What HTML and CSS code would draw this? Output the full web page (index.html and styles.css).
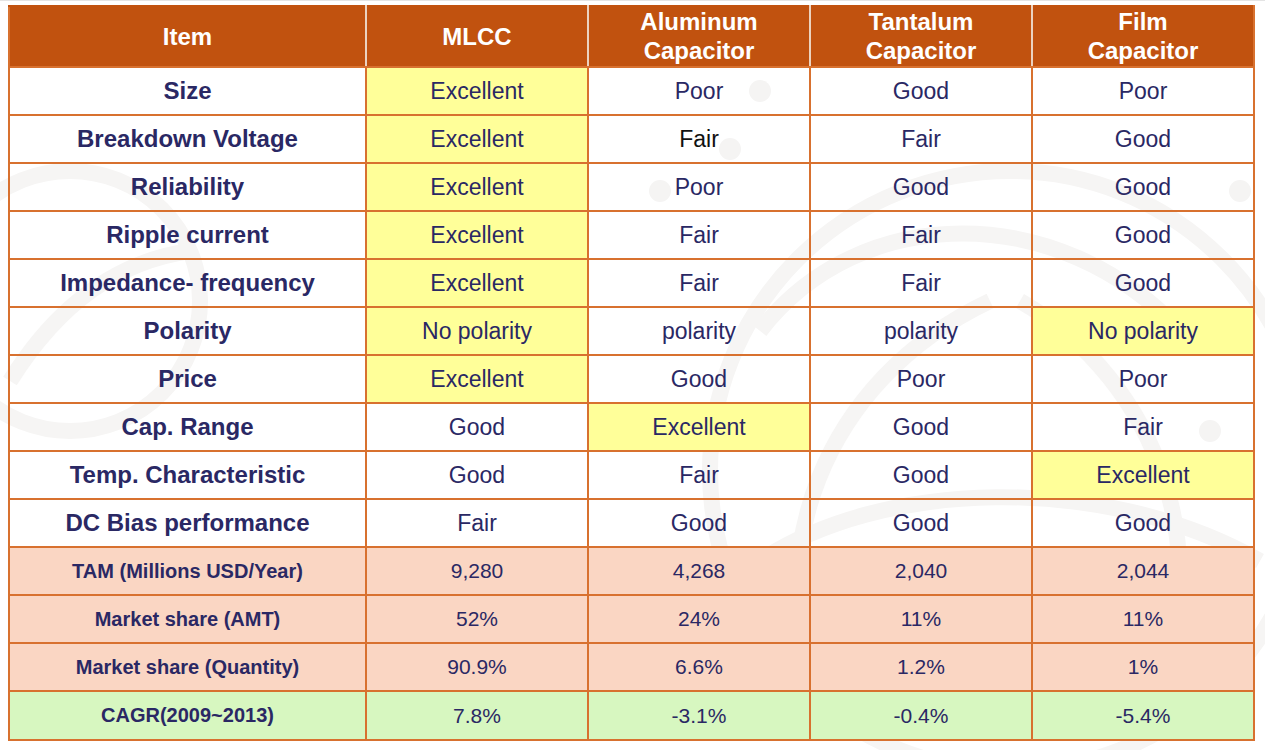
FILE: index.html
```html
<!DOCTYPE html>
<html>
<head>
<meta charset="utf-8">
<link rel="stylesheet" href="styles.css">
</head>
<body>
<div class="page">
  <svg class="watermark" width="1265" height="750" viewBox="0 0 1265 750">
    <g fill="none" stroke="#f6f5f4" stroke-width="16">
      <circle cx="1010" cy="470" r="300"/>
      <path d="M760 330 C 860 200, 1060 200, 1180 330"/>
      <path d="M820 700 C 760 560, 820 380, 990 300"/>
      <path d="M1020 300 C 1160 380, 1220 560, 1150 700"/>
      <path d="M760 560 C 880 480, 1100 470, 1260 560"/>
      <circle cx="70" cy="300" r="130"/>
      <path d="M10 380 C 60 300, 120 260, 190 250"/>
    </g>
    <g fill="#f5f4f3">
      <circle cx="760" cy="90" r="11"/>
      <circle cx="730" cy="148" r="11"/>
      <circle cx="660" cy="190" r="11"/>
      <circle cx="1240" cy="190" r="11"/>
      <circle cx="1210" cy="430" r="11"/>
    </g>
  </svg>
  <table class="grid">
    <colgroup>
      <col class="c-item"><col class="c-val"><col class="c-val"><col class="c-val"><col class="c-val">
    </colgroup>
    <thead>
      <tr class="head">
        <th>Item</th><th>MLCC</th><th>Aluminum<br>Capacitor</th><th>Tantalum<br>Capacitor</th><th>Film<br>Capacitor</th>
      </tr>
    </thead>
    <tbody>
      <tr><th>Size</th><td class="hl">Excellent</td><td>Poor</td><td>Good</td><td>Poor</td></tr>
      <tr><th>Breakdown Voltage</th><td class="hl">Excellent</td><td class="black">Fair</td><td>Fair</td><td>Good</td></tr>
      <tr><th>Reliability</th><td class="hl">Excellent</td><td>Poor</td><td>Good</td><td>Good</td></tr>
      <tr><th>Ripple current</th><td class="hl">Excellent</td><td>Fair</td><td>Fair</td><td>Good</td></tr>
      <tr><th>Impedance- frequency</th><td class="hl">Excellent</td><td>Fair</td><td>Fair</td><td>Good</td></tr>
      <tr><th>Polarity</th><td class="hl">No polarity</td><td>polarity</td><td>polarity</td><td class="hl">No polarity</td></tr>
      <tr><th>Price</th><td class="hl">Excellent</td><td>Good</td><td>Poor</td><td>Poor</td></tr>
      <tr><th>Cap. Range</th><td>Good</td><td class="hl">Excellent</td><td>Good</td><td>Fair</td></tr>
      <tr><th>Temp. Characteristic</th><td>Good</td><td>Fair</td><td>Good</td><td class="hl">Excellent</td></tr>
      <tr><th>DC Bias performance</th><td>Fair</td><td>Good</td><td>Good</td><td>Good</td></tr>
      <tr class="market"><th>TAM (Millions USD/Year)</th><td>9,280</td><td>4,268</td><td>2,040</td><td>2,044</td></tr>
      <tr class="market"><th>Market share (AMT)</th><td>52%</td><td>24%</td><td>11%</td><td>11%</td></tr>
      <tr class="market"><th>Market share (Quantity)</th><td>90.9%</td><td>6.6%</td><td>1.2%</td><td>1%</td></tr>
      <tr class="growth"><th>CAGR(2009~2013)</th><td>7.8%</td><td>-3.1%</td><td>-0.4%</td><td>-5.4%</td></tr>
    </tbody>
  </table>
</div>
</body>
</html>
```
FILE: styles.css
```css
html, body {
  margin: 0;
  padding: 0;
  background: #ffffff;
}

.page {
  position: relative;
  width: 1265px;
  height: 750px;
  overflow: hidden;
  border-top: 1px solid #e4e4e4;
  box-sizing: border-box;
  font-family: "Liberation Sans", Arial, sans-serif;
}

.watermark {
  position: absolute;
  left: 0;
  top: 0;
  z-index: 0;
}

.grid {
  position: relative;
  z-index: 1;
  margin: 4px 0 0 8px;
  width: 1247px;
  border-collapse: collapse;
  table-layout: fixed;
  color: #2a2864;
}

.c-item { width: 357px; }
.c-val { width: 222px; }

.grid th,
.grid td {
  border: 2px solid #d8712f;
  text-align: center;
  vertical-align: middle;
  padding: 0;
}

.grid tbody tr {
  height: 48px;
}

.grid tbody th {
  font-weight: bold;
  font-size: 24px;
}

.grid tbody td {
  font-size: 23px;
  font-weight: normal;
}

.head {
  height: 60px;
}

.head th {
  background: #c1520f;
  color: #ffffff;
  font-size: 24px;
  font-weight: bold;
  line-height: 29px;
  border-top-color: #c1520f;
  border-left-color: #ecd3c0;
  border-right-color: #ecd3c0;
  padding-bottom: 1px;
}

.head th:first-child {
  border-left-color: #d8712f;
}

.head th:last-child {
  border-right-color: #d8712f;
}

.grid td.hl {
  background: #ffff99;
}

.grid td.black {
  color: #111111;
}

.market th,
.market td {
  background: #fad6c3;
}

.growth th,
.growth td {
  background: #d7f7c0;
}

.grid .market th,
.grid .growth th {
  font-size: 20px;
}

.grid .market td,
.grid .growth td {
  font-size: 21px;
}

.grid .growth {
  height: 49px;
}
```
